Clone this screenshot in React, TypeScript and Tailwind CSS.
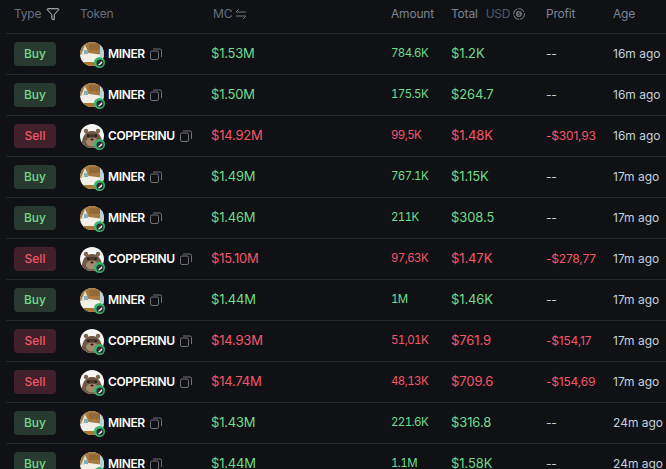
import React from "react";
import { Funnel } from "lucide-react";

type Trade = {
  side: "Buy" | "Sell";
  token: "MINER" | "COPPERINU";
  mc: string;
  amount: string;
  total: string;
  profit: string;
  age: string;
};

const TRADES: Trade[] = [
  { side: "Buy", token: "MINER", mc: "$1.53M", amount: "784.6K", total: "$1.2K", profit: "--", age: "16m ago" },
  { side: "Buy", token: "MINER", mc: "$1.50M", amount: "175.5K", total: "$264.7", profit: "--", age: "16m ago" },
  { side: "Sell", token: "COPPERINU", mc: "$14.92M", amount: "99,5K", total: "$1.48K", profit: "-$301,93", age: "16m ago" },
  { side: "Buy", token: "MINER", mc: "$1.49M", amount: "767.1K", total: "$1.15K", profit: "--", age: "17m ago" },
  { side: "Buy", token: "MINER", mc: "$1.46M", amount: "211K", total: "$308.5", profit: "--", age: "17m ago" },
  { side: "Sell", token: "COPPERINU", mc: "$15.10M", amount: "97,63K", total: "$1.47K", profit: "-$278,77", age: "17m ago" },
  { side: "Buy", token: "MINER", mc: "$1.44M", amount: "1M", total: "$1.46K", profit: "--", age: "17m ago" },
  { side: "Sell", token: "COPPERINU", mc: "$14.93M", amount: "51,01K", total: "$761.9", profit: "-$154,17", age: "17m ago" },
  { side: "Sell", token: "COPPERINU", mc: "$14.74M", amount: "48,13K", total: "$709.6", profit: "-$154,69", age: "17m ago" },
  { side: "Buy", token: "MINER", mc: "$1.43M", amount: "221.6K", total: "$316.8", profit: "--", age: "24m ago" },
  { side: "Buy", token: "MINER", mc: "$1.44M", amount: "1.1M", total: "$1.58K", profit: "--", age: "24m ago" },
];

const CopyIcon = () => (
  <svg viewBox="0 0 12 12" fill="none" stroke="#6f7378" strokeWidth="1" className="w-3 h-3 shrink-0 ml-[1px]">
    <rect x="0.5" y="3" width="8" height="8.5" rx="1.5" />
    <path d="M3 1 H10 a1.5 1.5 0 0 1 1.5 1.5 V9" />
  </svg>
);

const CoinIcon = () => (
  <svg viewBox="0 0 12 12" fill="none" className="w-3 h-3 ml-[3px] shrink-0">
    <circle cx="6" cy="6" r="5.4" stroke="#7f848a" strokeWidth="1" strokeDasharray="7 1" />
    <circle cx="6" cy="6" r="3" fill="#6f747a" />
    <path d="M7.2 4.6 H5.2 V6 H6.9 V7.4 H4.8" stroke="#1b1c1f" strokeWidth="0.7" />
  </svg>
);

// token pictures are raster in the original, so these are rough painted stand-ins
const TokenAvatar = ({ token }: { token: Trade["token"] }) => (
  <div className="relative w-6 h-6 shrink-0">
    <svg viewBox="0 0 24 24" className="w-6 h-6">
      <defs>
        <clipPath id="avatar-clip">
          <circle cx="12" cy="12" r="12" />
        </clipPath>
      </defs>
      {token === "MINER" ? (
        <g clipPath="url(#avatar-clip)">
          <rect width="24" height="24" fill="#f2efe6" />
          <path d="M0 0 H24 V13 L9 11 L0 13 Z" fill="#a87a40" />
          <rect x="9" y="2" width="11" height="6" fill="#94693a" />
          <path d="M1 13 L5 3 L9 12 Z" fill="#dbe5da" />
          <rect x="4" y="8" width="4" height="4" fill="#86aebb" />
          <rect x="20" y="3" width="4" height="12" fill="#b9d2d6" />
          <rect y="20" width="24" height="4" fill="#a9772f" />
        </g>
      ) : (
        <g clipPath="url(#avatar-clip)">
          <rect width="24" height="24" fill="#f5f5f3" />
          <path d="M2 24 C1 15 4 7 12 7 C20 7 23 15 22 24 Z" fill="#6e5744" />
          <circle cx="6" cy="7" r="2.2" fill="#7d6550" />
          <circle cx="18" cy="7" r="2.2" fill="#7d6550" />
          <path d="M7 10 H17 L15 14 H9 Z" fill="#4b3a2e" />
          <ellipse cx="12" cy="18" rx="6" ry="4.5" fill="#a58a6c" />
          <circle cx="8" cy="12" r="1" fill="#17100c" />
          <circle cx="16" cy="12" r="1" fill="#17100c" />
          <ellipse cx="12" cy="15.5" rx="1.6" ry="1" fill="#2a1c15" />
        </g>
      )}
    </svg>
    <div className="absolute right-[-1px] bottom-[-2px] w-[11px] h-[11px] rounded-full bg-[#37b46e] flex items-center justify-center">
      <svg viewBox="0 0 9 9" className="w-[8px] h-[8px]">
        <circle cx="4.5" cy="4.5" r="4" fill="#2b2f33" />
        <path d="M2 7 L6.8 2.2 L7 4.6 L4 7 Z" fill="#eef3f0" />
      </svg>
    </div>
  </div>
);

export default function App() {
  return (
    <div
      className="w-[666px] h-[469px] overflow-hidden bg-[#101114] pl-[6px] text-[12px]"
      style={{ fontFamily: "Inter, 'Liberation Sans', sans-serif" }}
    >
      {/* header */}
      <div className="flex items-center h-[34px] pb-[6px] border-b border-[#26282c] text-[#66707f] tracking-[-0.2px]">
        <div className="w-[74px] pl-2 flex items-center gap-[5px]">
          Type
          <Funnel className="w-[14px] h-[14px] text-[#e6e8ec]" strokeWidth={1.5} />
        </div>
        <div className="w-[133px]">Token</div>
        <div className="w-[178px] flex items-center gap-[3px]">
          MC
          <svg viewBox="0 0 12 12" fill="none" stroke="#6f7378" strokeWidth="1" className="w-3 h-3">
            <path d="M11 4 H1 L4 1" />
            <path d="M1 8 H11 L8 11" />
          </svg>
        </div>
        <div className="w-[60px] text-[#7b8494]">Amount</div>
        <div className="w-[95px] flex items-center">
          <span className="text-[#7b8494]">Total</span>
          <span className="ml-[8px] text-[#525a68] tracking-[-0.2px]">USD</span>
          <CoinIcon />
        </div>
        <div className="w-[67px] text-[#7b8494]">Profit</div>
        <div className="text-[#7b8494]">Age</div>
      </div>

      {/* rows */}
      {TRADES.map((t, i) => {
        const buy = t.side === "Buy";
        const color = buy ? "text-[#6fdc8c]" : "text-[#f4566c]";
        return (
          <div key={i} className="flex items-center h-[41px] border-b border-[#26282c]">
            <div className="w-[74px] pl-2">
              <div
                className={
                  buy
                    ? "w-[42px] h-6 rounded flex items-center justify-center font-medium bg-[#28392f] text-[#6fdc8c]"
                    : "w-[42px] h-6 rounded flex items-center justify-center font-medium bg-[#40212b] text-[#f4566c]"
                }
              >
                {t.side}
              </div>
            </div>
            <div className="w-[131px] flex items-center gap-1">
              <TokenAvatar token={t.token} />
              <span className="font-semibold text-white tracking-[-0.35px]">{t.token}</span>
              <CopyIcon />
            </div>
            <div className={`w-[180px] text-[13px] tracking-[-0.2px] ${color}`}>{t.mc}</div>
            <div className={`w-[60px] text-[11.5px] tabular-nums tracking-[-0.6px] ${color}`}>{t.amount}</div>
            <div className={`w-[95px] text-[13px] tracking-[-0.1px] ${color}`}>{t.total}</div>
            <div className={`w-[67px] tracking-[-0.2px] ${buy ? "text-[#c7ccd4]" : color}`}>{t.profit}</div>
            <div className="text-[#c3d0de] whitespace-nowrap">{t.age}</div>
          </div>
        );
      })}
    </div>
  );
}
